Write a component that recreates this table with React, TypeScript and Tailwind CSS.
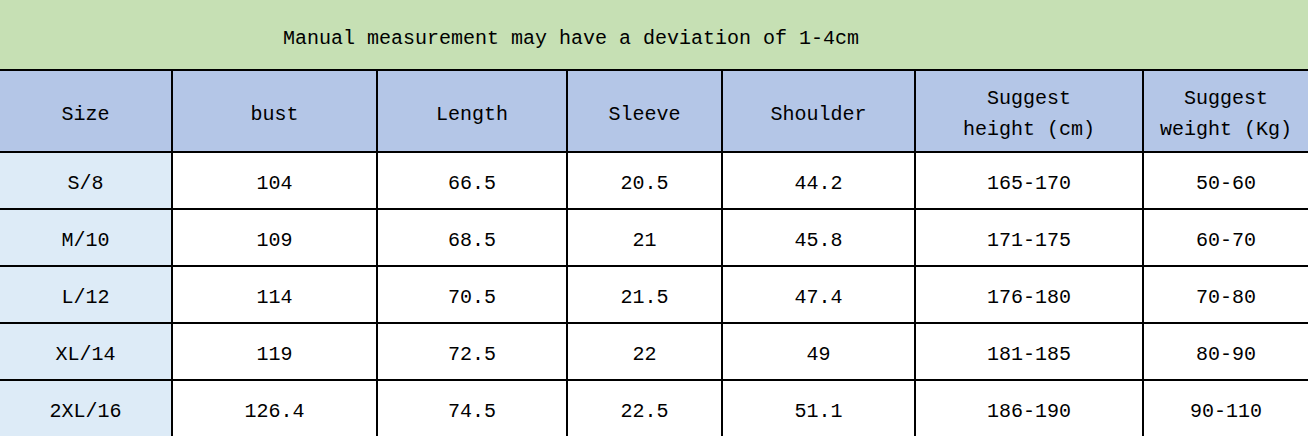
import React from "react";

const cols = "grid grid-cols-[171px_205px_190px_155px_193px_228px_1fr]";

const rows = [
  ["S/8", "104", "66.5", "20.5", "44.2", "165-170", "50-60"],
  ["M/10", "109", "68.5", "21", "45.8", "171-175", "60-70"],
  ["L/12", "114", "70.5", "21.5", "47.4", "176-180", "70-80"],
  ["XL/14", "119", "72.5", "22", "49", "181-185", "80-90"],
  ["2XL/16", "126.4", "74.5", "22.5", "51.1", "186-190", "90-110"],
];

export default function App() {
  const font = { fontFamily: '"Liberation Mono", "DejaVu Sans Mono", monospace' };
  return (
    <div className="w-[1308px] h-[436px] overflow-hidden bg-white text-black text-[20px]" style={font}>
      <div className={`${cols} h-[69px] bg-[#c6e0b4]`}>
        <div className="col-span-6 flex items-center justify-center pt-[8px]">
          Manual measurement may have a deviation of 1-4cm
        </div>
        <div />
      </div>
      <div className={`${cols} h-[82px] bg-[#b4c6e7] border-t-2 border-black`}>
        {["Size", "bust", "Length", "Sleeve", "Shoulder"].map((h, i) => (
          <div
            key={h}
            className={`flex items-center justify-center pt-[7px] ${i > 0 ? "border-l-2 border-black" : ""}`}
          >
            {h}
          </div>
        ))}
        <div className="flex flex-col items-center justify-center pt-[6px] leading-[31px] border-l-2 border-black">
          <span>Suggest</span>
          <span>height (cm)</span>
        </div>
        <div className="flex flex-col items-center justify-center pt-[6px] leading-[31px] border-l-2 border-black">
          <span>Suggest</span>
          <span>weight (Kg)</span>
        </div>
      </div>
      {rows.map((r) => (
        <div key={r[0]} className={`${cols} h-[57px] border-t-2 border-black`}>
          {r.map((c, i) => (
            <div
              key={i}
              className={`flex items-center justify-center pt-[7px] ${
                i === 0 ? "bg-[#ddebf7]" : "border-l-2 border-black"
              }`}
            >
              {c}
            </div>
          ))}
        </div>
      ))}
    </div>
  );
}
